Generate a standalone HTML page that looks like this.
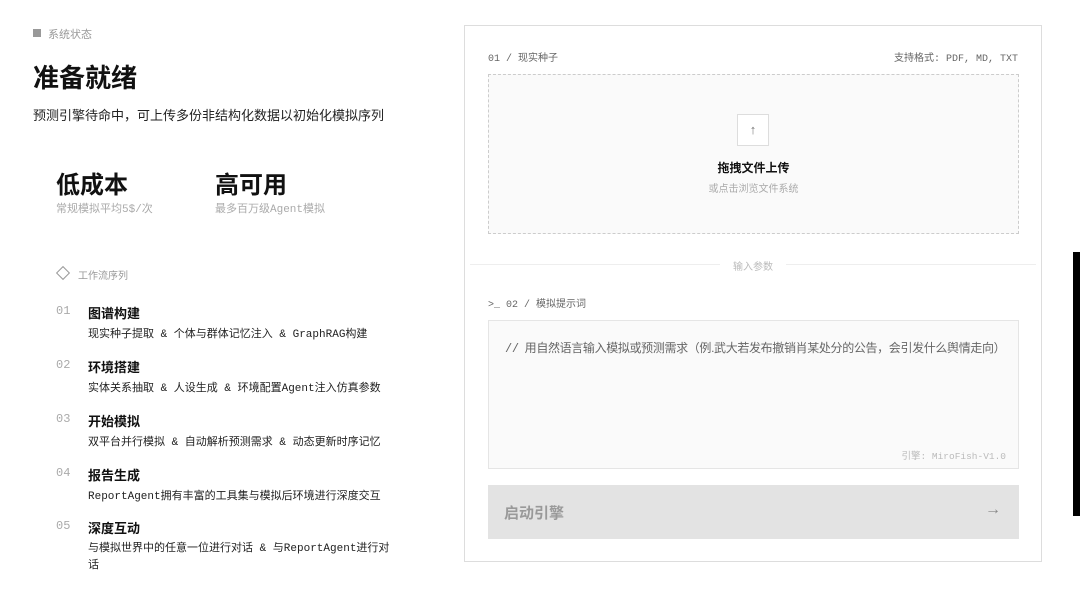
<!DOCTYPE html>
<html><head><meta charset="utf-8"><style>
*{margin:0;padding:0;box-sizing:border-box}
body{width:1080px;height:590px;background:#fff;position:relative;overflow:hidden;font-family:"Liberation Sans","Noto Sans CJK SC",sans-serif;color:#111}
.a{position:absolute;white-space:nowrap}
.mono{font-family:"Liberation Mono","Noto Sans CJK SC",monospace}
.num{color:#aaa;font-size:12px}
.t{font-size:13px;font-weight:bold;color:#111}
.d{font-size:11px;color:#222}
</style></head><body>
<div class="a" style="left:33px;top:29px;width:8px;height:8px;background:#999"></div>
<div class="a" style="left:48px;top:26px;font-size:11px;color:#999">系统状态</div>
<div class="a" style="left:33px;top:58px;font-size:26px;font-weight:bold">准备就绪</div>
<div class="a" style="left:33px;top:105px;font-size:13px;color:#222">预测引擎待命中，可上传多份非结构化数据以初始化模拟序列</div>
<div class="a" style="left:56px;top:165px;font-size:24px;font-weight:bold">低成本</div>
<div class="a" style="left:215px;top:165px;font-size:24px;font-weight:bold">高可用</div>
<div class="a mono" style="left:56px;top:200px;font-size:11px;color:#aaa">常规模拟平均5$/次</div>
<div class="a mono" style="left:215px;top:200px;font-size:11px;color:#aaa">最多百万级Agent模拟</div>
<div class="a" style="left:58px;top:268px;width:10px;height:10px;border:1px solid #999;transform:rotate(45deg)"></div>
<div class="a" style="left:78px;top:267px;font-size:10px;color:#999">工作流序列</div>

<div class="a mono num" style="left:56px;top:304px">01</div>
<div class="a t" style="left:88px;top:303px">图谱构建</div>
<div class="a d mono" style="left:88px;top:325px">现实种子提取 &amp; 个体与群体记忆注入 &amp; GraphRAG构建</div>
<div class="a mono num" style="left:56px;top:358px">02</div>
<div class="a t" style="left:88px;top:357px">环境搭建</div>
<div class="a d mono" style="left:88px;top:379px">实体关系抽取 &amp; 人设生成 &amp; 环境配置Agent注入仿真参数</div>
<div class="a mono num" style="left:56px;top:412px">03</div>
<div class="a t" style="left:88px;top:411px">开始模拟</div>
<div class="a d mono" style="left:88px;top:433px">双平台并行模拟 &amp; 自动解析预测需求 &amp; 动态更新时序记忆</div>
<div class="a mono num" style="left:56px;top:466px">04</div>
<div class="a t" style="left:88px;top:465px">报告生成</div>
<div class="a d mono" style="left:88px;top:487px">ReportAgent拥有丰富的工具集与模拟后环境进行深度交互</div>
<div class="a mono num" style="left:56px;top:519px">05</div>
<div class="a t" style="left:88px;top:518px">深度互动</div>
<div class="a d mono" style="left:88px;top:541px;line-height:17px">与模拟世界中的任意一位进行对话 &amp; 与ReportAgent进行对<br>话</div>

<div class="a" style="left:464px;top:25px;width:578px;height:537px;border:1px solid #ddd"></div>
<div class="a mono" style="left:488px;top:49px;font-size:10px;color:#666">01 / 现实种子</div>
<div class="a mono" style="right:62px;top:49px;font-size:10px;color:#666">支持格式: PDF, MD, TXT</div>
<div class="a" style="left:488px;top:74px;width:531px;height:160px;border:1px dashed #ccc;background:#fafafa"></div>
<div class="a" style="left:737px;top:114px;width:32px;height:32px;border:1px solid #ddd;background:#fff;text-align:center;line-height:30px;font-size:13px;color:#777">↑</div>
<div class="a" style="left:488px;width:531px;top:159px;text-align:center;font-size:12px;font-weight:bold">拖拽文件上传</div>
<div class="a" style="left:488px;width:531px;top:180px;text-align:center;font-size:10px;color:#aaa">或点击浏览文件系统</div>
<div class="a" style="left:470px;top:264px;width:250px;height:1px;background:#eee"></div>
<div class="a" style="left:786px;top:264px;width:250px;height:1px;background:#eee"></div>
<div class="a" style="left:720px;width:66px;top:258px;text-align:center;font-size:10px;color:#bbb">输入参数</div>
<div class="a mono" style="left:488px;top:295px;font-size:10px;color:#666">&gt;_ 02 / 模拟提示词</div>
<div class="a" style="left:488px;top:320px;width:531px;height:149px;border:1px solid #e5e5e5;background:#fafafa"></div>
<div class="a" style="left:505px;top:339px;font-size:12px;color:#666;letter-spacing:-0.35px"><span class="mono">//</span>&nbsp; 用自然语言输入模拟或预测需求（例.武大若发布撤销肖某处分的公告，会引发什么舆情走向）</div>
<div class="a mono" style="right:74px;top:448px;font-size:9.5px;color:#bbb">引擎: MiroFish-V1.0</div>
<div class="a" style="left:488px;top:485px;width:531px;height:54px;background:#e3e3e3"></div>
<div class="a" style="left:504px;top:502px;font-size:15px;font-weight:bold;color:#999">启动引擎</div>
<div class="a" style="left:985px;top:501px;font-size:16px;color:#888">→</div>

<div class="a" style="left:1073px;top:252px;width:7px;height:264px;background:#000"></div>
</body></html>
